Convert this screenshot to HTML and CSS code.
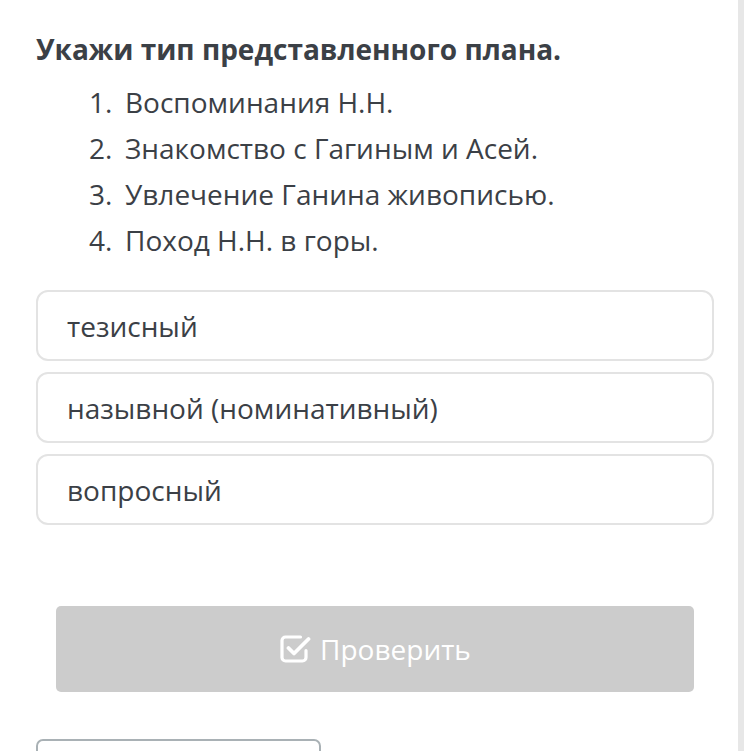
FILE: index.html
```html
<!DOCTYPE html>
<html lang="ru">
<head>
<meta charset="utf-8">
<link rel="stylesheet" href="styles.css">
</head>
<body>
<div class="page">
  <main class="content">
    <h1 class="title">Укажи тип представленного плана.</h1>
    <ol class="plan">
      <li>Воспоминания Н.Н.</li>
      <li>Знакомство с Гагиным и Асей.</li>
      <li>Увлечение Ганина живописью.</li>
      <li>Поход Н.Н. в горы.</li>
    </ol>
    <div class="options">
      <div class="option">тезисный</div>
      <div class="option">назывной (номинативный)</div>
      <div class="option">вопросный</div>
    </div>
    <div class="actions">
      <button class="check-btn" type="button">
        <svg class="check-icon" viewBox="0 0 32 32" width="32" height="32" aria-hidden="true">
          <path d="M27 17.5v7a3.5 3.5 0 0 1-3.5 3.5h-17A3.5 3.5 0 0 1 3 24.5v-17A3.5 3.5 0 0 1 6.5 4h15" fill="none" stroke="#fff" stroke-width="3.2" stroke-linecap="round" stroke-linejoin="round"/>
          <path d="M9.5 15l5.5 5.5L29.5 6" fill="none" stroke="#fff" stroke-width="3.8" stroke-linecap="round" stroke-linejoin="round"/>
        </svg>
        <span>Проверить</span>
      </button>
    </div>
    <div class="next-box"></div>
  </main>
  <div class="scrollbar"></div>
</div>
</body>
</html>
```
FILE: styles.css
```css
html, body {
  margin: 0;
  padding: 0;
  background: #ffffff;
  height: 100%;
  overflow: hidden;
}
.page {
  display: flex;
  height: 751px;
  font-family: "Open Sans", "Noto Sans", sans-serif;
  color: #3b4046;
}
.content {
  width: 678px;
  padding: 24px 0 0 36px;
  flex: none;
}
.title {
  margin: 0;
  font-size: 28px;
  font-weight: 700;
  line-height: 50px;
  color: #3b4046;
}
.plan {
  margin: 5px 0 0 0;
  padding-left: 53px;
  font-size: 28px;
  line-height: 46px;
  list-style: none;
}
.plan li::before {
  content: counter(list-item) ".";
  display: inline-block;
  width: 36px;
}
.options {
  margin-top: 27px;
  display: flex;
  flex-direction: column;
  gap: 11px;
}
.option {
  height: 67px;
  border: 2px solid #e3e3e3;
  border-radius: 12px;
  padding: 0 29px;
  display: flex;
  align-items: center;
  font-size: 28px;
}
.actions {
  margin-top: 81px;
  padding: 0 20px;
}
.check-btn {
  width: 100%;
  height: 86px;
  border: none;
  border-radius: 5px;
  background: #cccccc;
  color: #ffffff;
  font-family: "Open Sans", "Noto Sans", sans-serif;
  font-size: 28px;
  display: flex;
  align-items: center;
  justify-content: center;
  gap: 9px;
  padding: 0;
}
.check-icon {
  display: block;
}
.next-box {
  margin-top: 47px;
  width: 281px;
  height: 40px;
  border: 2px solid #a9b1b5;
  border-radius: 7px;
}
.scrollbar {
  margin-left: 24px;
  width: 6px;
  background: #e7e7e7;
  height: 100%;
}
```
